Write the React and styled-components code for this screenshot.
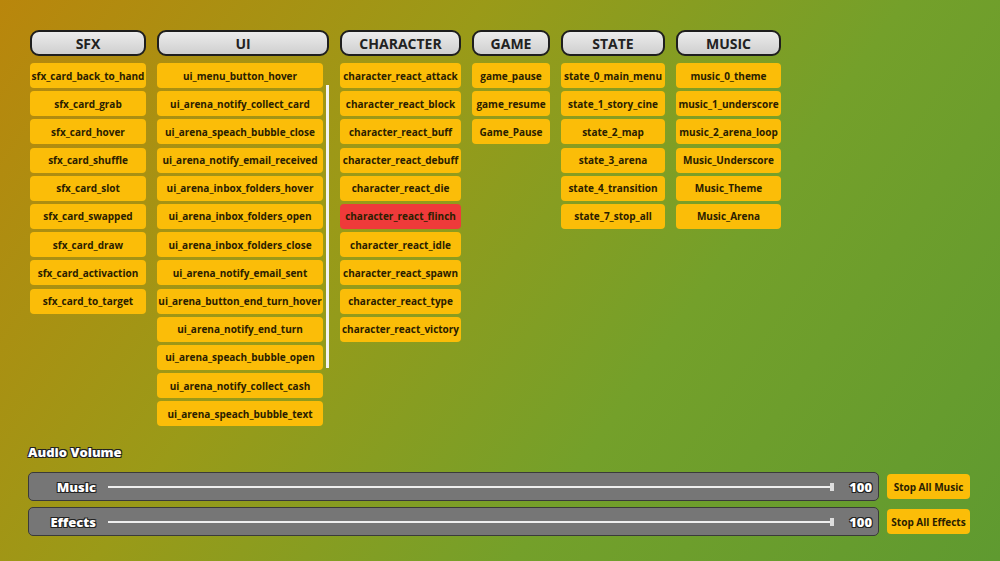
import React from 'react'
import styled, { createGlobalStyle } from 'styled-components'

const Global = createGlobalStyle`
  html, body { margin: 0; height: 100%; }
  body {
    font-family: "Open Sans", "Noto Sans", sans-serif;
    background: linear-gradient(125deg, #b9860c 0%, #9a9a18 35%, #74a02a 65%, #5f9a30 100%);
    overflow: hidden;
  }
`

const Page = styled.div`
  width: 1000px;
  height: 561px;
  box-sizing: border-box;
  padding: 30px 28px 0 28px;
  display: flex;
  flex-direction: column;
`

const Columns = styled.div`
  display: flex;
  gap: 11px;
  height: 400px;
  padding-left: 2px;
`

const Column = styled.div`
  width: ${p => p.w}px;
  display: flex;
  flex-direction: column;
  gap: 7px;
`

const Header = styled.div`
  height: 26px;
  box-sizing: border-box;
  border: 2px solid #1e1e1e;
  border-radius: 9px;
  background: linear-gradient(#ececec, #cfcfcf);
  display: flex;
  align-items: center;
  justify-content: center;
  font-weight: 700;
  font-size: 14px;
  color: #222;
`

const List = styled.div`
  display: flex;
  flex-direction: column;
  gap: 3.2px;
  position: relative;
  padding-right: ${p => (p.scroll ? 6 : 0)}px;
`

const Item = styled.div`
  height: 25px;
  border-radius: 4px;
  background: ${p => (p.hot ? '#ef3a3a' : '#fbbd08')};
  display: flex;
  align-items: center;
  justify-content: center;
  font-size: 10px;
  font-weight: 700;
  color: #2a2000;
  white-space: nowrap;
`

const ScrollBar = styled.div`
  position: absolute;
  right: 0;
  top: 22px;
  width: 3px;
  height: 283px;
  background: #f4f4f4;
`

const Volume = styled.div`
  margin-top: 13px;
  display: flex;
  flex-direction: column;
  gap: 6px;
`

const Title = styled.div`
  color: #fff;
  font-weight: 800;
  font-size: 13px;
  text-shadow: -1px -1px 0 #222, 1px -1px 0 #222, -1px 1px 0 #222, 1px 1px 0 #222;
  margin-bottom: 5px;
`

const Row = styled.div`
  display: flex;
  gap: 8px;
  align-items: center;
`

const Bar = styled.div`
  width: 851px;
  height: 29px;
  box-sizing: border-box;
  border: 1px solid #3a3a3a;
  border-radius: 5px;
  background: #767676;
  display: flex;
  align-items: center;
  padding: 0 6px 0 0;
`

const Label = styled.div`
  width: 67px;
  text-align: right;
  color: #fff;
  font-weight: 800;
  font-size: 13px;
  text-shadow: -1px -1px 0 #222, 1px -1px 0 #222, -1px 1px 0 #222, 1px 1px 0 #222;
  margin-right: 12px;
`

const Track = styled.div`
  flex: 1;
  height: 2px;
  background: #eee;
  position: relative;
`

const Thumb = styled.div`
  position: absolute;
  right: 0;
  top: -3px;
  width: 4px;
  height: 8px;
  background: #ddd;
`

const Value = styled(Label)`
  width: 30px;
  margin: 0 0 0 8px;
`

const StopButton = styled.div`
  width: 83px;
  height: 25px;
  border-radius: 4px;
  background: #fbbd08;
  display: flex;
  align-items: center;
  justify-content: center;
  font-size: 10px;
  font-weight: 700;
  color: #2a2000;
`

const columns = [
  { name: 'SFX', w: 116, items: ['sfx_card_back_to_hand', 'sfx_card_grab', 'sfx_card_hover', 'sfx_card_shuffle', 'sfx_card_slot', 'sfx_card_swapped', 'sfx_card_draw', 'sfx_card_activaction', 'sfx_card_to_target'] },
  { name: 'UI', w: 172, scroll: true, items: ['ui_menu_button_hover', 'ui_arena_notify_collect_card', 'ui_arena_speach_bubble_close', 'ui_arena_notify_email_received', 'ui_arena_inbox_folders_hover', 'ui_arena_inbox_folders_open', 'ui_arena_inbox_folders_close', 'ui_arena_notify_email_sent', 'ui_arena_button_end_turn_hover', 'ui_arena_notify_end_turn', 'ui_arena_speach_bubble_open', 'ui_arena_notify_collect_cash', 'ui_arena_speach_bubble_text'] },
  { name: 'CHARACTER', w: 121, items: ['character_react_attack', 'character_react_block', 'character_react_buff', 'character_react_debuff', 'character_react_die', 'character_react_flinch', 'character_react_idle', 'character_react_spawn', 'character_react_type', 'character_react_victory'] },
  { name: 'GAME', w: 78, items: ['game_pause', 'game_resume', 'Game_Pause'] },
  { name: 'STATE', w: 104, items: ['state_0_main_menu', 'state_1_story_cine', 'state_2_map', 'state_3_arena', 'state_4_transition', 'state_7_stop_all'] },
  { name: 'MUSIC', w: 105, items: ['music_0_theme', 'music_1_underscore', 'music_2_arena_loop', 'Music_Underscore', 'Music_Theme', 'Music_Arena'] },
]

export default function App() {
  return (
    <Page>
      <Global />
      <Columns>
        {columns.map(c => (
          <Column key={c.name} w={c.w}>
            <Header>{c.name}</Header>
            <List scroll={c.scroll}>
              {c.items.map(i => (
                <Item key={i} hot={i === 'character_react_flinch'}>{i}</Item>
              ))}
              {c.scroll && <ScrollBar />}
            </List>
          </Column>
        ))}
      </Columns>
      <Volume>
        <Title>Audio Volume</Title>
        {[['Music', 'Stop All Music'], ['Effects', 'Stop All Effects']].map(([l, b]) => (
          <Row key={l}>
            <Bar>
              <Label>{l}</Label>
              <Track><Thumb /></Track>
              <Value>100</Value>
            </Bar>
            <StopButton>{b}</StopButton>
          </Row>
        ))}
      </Volume>
    </Page>
  )
}
